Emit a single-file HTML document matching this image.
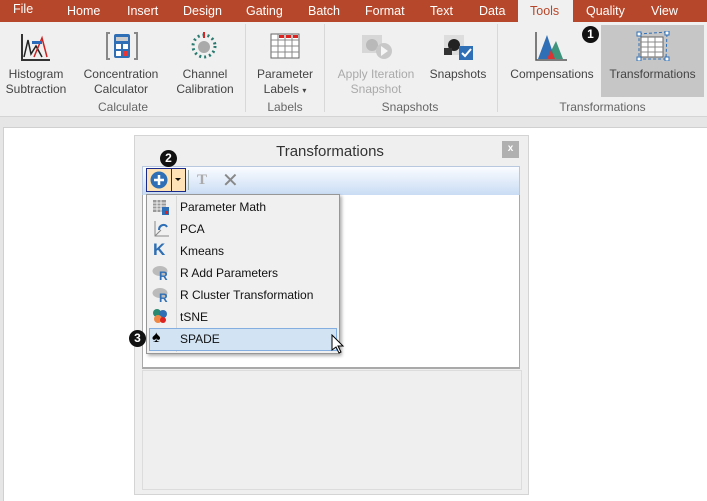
<!DOCTYPE html>
<html><head><meta charset="utf-8"><style>
*{box-sizing:border-box;margin:0;padding:0}
body{width:707px;height:501px;overflow:hidden;background:#e6e6e6;font-family:"Liberation Sans",sans-serif;font-size:12px;color:#444;position:relative}
.abs{position:absolute}
.tabs{left:0;top:0;width:707px;height:22px;background:#b7472a}
.tab{position:absolute;top:4px;color:#fff;font-size:12.5px}
.ribbon{left:0;top:22px;width:707px;height:95px;background:#f0f0f0;border-bottom:1px solid #d4d4d4}
.lbl{position:absolute;text-align:center;font-size:12px;color:#444;line-height:15px}
.grp{position:absolute;top:78px;font-size:12px;color:#666;text-align:center}
.sep{position:absolute;top:22px;width:1px;height:88px;background:#d8d8d8}
.mi{position:absolute;left:150px;width:186px;height:22px;font-size:12px;color:#111;line-height:22px}
.mi span{position:absolute;left:30px}
.badge{position:absolute;width:17px;height:17px;border-radius:50%;background:#111;color:#fff;font-weight:bold;font-size:12px;text-align:center;line-height:17px}
</style></head><body>
<div class="abs tabs"></div>
<div class="tab" style="left:13px;top:2px">File</div>
<div class="tab" style="left:67px">Home</div>
<div class="tab" style="left:127px">Insert</div>
<div class="tab" style="left:183px">Design</div>
<div class="tab" style="left:246px">Gating</div>
<div class="tab" style="left:308px">Batch</div>
<div class="tab" style="left:365px">Format</div>
<div class="tab" style="left:430px">Text</div>
<div class="tab" style="left:479px">Data</div>
<div class="abs" style="left:518px;top:0;width:55px;height:23px;background:#f0f0f0"></div>
<div class="tab" style="left:530px;color:#b7472a">Tools</div>
<div class="tab" style="left:586px">Quality</div>
<div class="tab" style="left:651px">View</div>
<div class="abs ribbon"></div>
<!-- ribbon icons -->
<svg class="abs" style="left:20px;top:32px" width="32" height="30"><path d="M2 2v26h28" stroke="#333" stroke-width="2" fill="none"/><path d="M4 25 L8 8 L11 22 L16 14 L22 25" stroke="#222" stroke-width="1.5" fill="none"/><path d="M14 25 L22 6 L27 25" stroke="#c22" stroke-width="1.5" fill="none"/><rect x="12" y="9" width="10" height="3" fill="#2a6ab8"/></svg>
<svg class="abs" style="left:106px;top:32px" width="32" height="28"><path d="M4 1H1v26h3M28 1h3v26h-3" stroke="#888" stroke-width="2" fill="none"/><rect x="8" y="2" width="16" height="24" rx="2" fill="#2f6fb5"/><rect x="10" y="5" width="12" height="4" fill="#ccc"/><rect x="10" y="12" width="5" height="5" fill="#fff"/><rect x="17" y="12" width="5" height="5" fill="#fff"/><rect x="10" y="19" width="5" height="5" fill="#fff"/><rect x="17" y="19" width="5" height="5" fill="#e33"/></svg>
<svg class="abs" style="left:189px;top:31px" width="30" height="30"><circle cx="15" cy="15" r="11" stroke="#2a7a70" stroke-width="3" stroke-dasharray="2 3" fill="none"/><circle cx="15" cy="16" r="6" fill="#aaa"/><rect x="14" y="1" width="2" height="6" fill="#d22"/></svg>
<svg class="abs" style="left:270px;top:33px" width="30" height="26"><rect x="1" y="1" width="28" height="24" fill="#fff" stroke="#666"/><path d="M1 7h28M1 13h28M1 19h28M8 1v24M15 1v24M22 1v24" stroke="#888"/><rect x="9" y="2" width="5" height="3" fill="#d22"/><rect x="16" y="2" width="5" height="3" fill="#d22"/><rect x="23" y="2" width="5" height="3" fill="#d22"/></svg>
<svg class="abs" style="left:360px;top:33px" width="32" height="28" opacity="0.45"><rect x="2" y="2" width="20" height="18" fill="#bbb"/><circle cx="12" cy="12" r="6" fill="#777"/><circle cx="24" cy="18" r="8" fill="#999"/><path d="M21 13v10l7-5z" fill="#fff"/></svg>
<svg class="abs" style="left:442px;top:34px" width="32" height="28"><rect x="2" y="1" width="20" height="20" fill="#ddd"/><circle cx="12" cy="11" r="6" fill="#222"/><rect x="2" y="14" width="8" height="7" fill="#333"/><rect x="17" y="12" width="14" height="14" fill="#2f6fb5"/><path d="M20 19l3 3 6-7" stroke="#fff" stroke-width="2" fill="none"/></svg>
<div class="abs" style="left:601px;top:25px;width:103px;height:72px;background:#c6c6c6"></div>
<svg class="abs" style="left:535px;top:32px" width="32" height="29"><path d="M1 0v28h31" stroke="#555" stroke-width="1.5" fill="none"/><path d="M3 27 L12 3 L20 27z" fill="#2f6fb5"/><path d="M12 27 L21 9 L28 27z" fill="#2a8a70" opacity="0.9"/><path d="M12 27 L16 18 L20 27z" fill="#d33"/></svg>
<svg class="abs" style="left:636px;top:31px" width="34" height="30"><path d="M3 3 L31 1 L30 28 L3 28z" fill="none" stroke="#2f6fb5" stroke-dasharray="3 2"/><rect x="5" y="6" width="22" height="20" fill="#fff" stroke="#666"/><path d="M5 11h22M5 16h22M5 21h22M12 6v20M19 6v20" stroke="#888"/><rect x="1" y="1" width="4" height="4" fill="#fff" stroke="#2f6fb5"/><rect x="29" y="0" width="4" height="4" fill="#fff" stroke="#2f6fb5"/><rect x="1" y="26" width="4" height="4" fill="#fff" stroke="#2f6fb5"/><rect x="29" y="26" width="4" height="4" fill="#fff" stroke="#2f6fb5"/></svg>
<div class="badge" style="left:582px;top:26px">1</div>
<div class="lbl" style="left:0;top:67px;width:72px">Histogram<br>Subtraction</div>
<div class="lbl" style="left:78px;top:67px;width:86px">Concentration<br>Calculator</div>
<div class="lbl" style="left:170px;top:67px;width:70px">Channel<br>Calibration</div>
<div class="lbl" style="left:250px;top:67px;width:70px">Parameter<br>Labels <span style="font-size:8px">▾</span></div>
<div class="lbl" style="left:330px;top:67px;width:92px;color:#aaa">Apply Iteration<br>Snapshot</div>
<div class="lbl" style="left:424px;top:67px;width:68px">Snapshots</div>
<div class="lbl" style="left:503px;top:67px;width:98px">Compensations</div>
<div class="lbl" style="left:601px;top:67px;width:103px">Transformations</div>
<div class="grp" style="left:78px;width:90px;top:100px">Calculate</div>
<div class="grp" style="left:250px;width:70px;top:100px">Labels</div>
<div class="grp" style="left:330px;width:160px;top:100px">Snapshots</div>
<div class="grp" style="left:500px;width:205px;top:100px">Transformations</div>
<div class="sep" style="left:245px;top:24px"></div>
<div class="sep" style="left:324px;top:24px"></div>
<div class="sep" style="left:497px;top:24px"></div>
<!-- work area -->
<div class="abs" style="left:3px;top:127px;width:704px;height:374px;background:#fff;border:1px solid #d0d0d0;border-right:none;border-bottom:none"></div>
<!-- dialog -->
<div class="abs" style="left:134px;top:135px;width:395px;height:360px;background:#efefef;border:1px solid #d4d4d4"></div>
<div class="abs" style="left:230px;top:143px;width:200px;text-align:center;font-size:15px;color:#333">Transformations</div>
<div class="abs" style="left:502px;top:141px;width:17px;height:17px;background:#b0b0b0;color:#fff;font-size:10px;font-weight:bold;text-align:center;line-height:16px">x</div>
<div class="abs" style="left:142px;top:166px;width:378px;height:30px;background:linear-gradient(#fafcff,#c9dcf4);border:1px solid #b8c8de"></div>
<div class="abs" style="left:146px;top:168px;width:26px;height:24px;background:#fde3b5;border:1px solid #1a2a8a"></div>
<div class="abs" style="left:171px;top:168px;width:15px;height:24px;background:#fde3b5;border:1px solid #1a2a8a"></div>
<svg class="abs" style="left:150px;top:171px" width="18" height="18"><circle cx="9" cy="9" r="8.5" fill="#2f6fb5"/><path d="M9 4v10M4 9h10" stroke="#fff" stroke-width="2.5"/></svg>
<div class="abs" style="left:175px;top:178px;border-left:3px solid transparent;border-right:3px solid transparent;border-top:3px solid #111"></div>
<div class="abs" style="left:188px;top:170px;width:1px;height:20px;background:#9aa"></div>
<div class="abs" style="left:197px;top:172px;font-family:'Liberation Serif';font-size:15px;font-weight:bold;color:#aaa">T</div>
<div class="abs" style="left:222px;top:168px;font-size:20px;color:#888">✕</div>
<div class="badge" style="left:160px;top:150px">2</div>
<div class="abs" style="left:142px;top:195px;width:378px;height:174px;background:#fff;border:1px solid #a9a9a9;border-top:none;border-bottom:2px solid #a9a9a9"></div>
<div class="abs" style="left:142px;top:370px;width:380px;height:120px;border:1px solid #dcdcdc"></div>
<!-- menu -->
<div class="abs" style="left:146px;top:194px;width:194px;height:160px;background:#f0f0f0;border:1px solid #979797;box-shadow:2px 2px 3px rgba(0,0,0,.3)"></div>
<div class="abs" style="left:176px;top:196px;width:1px;height:156px;background:#d8d8d8"></div>
<div class="abs" style="left:149px;top:328px;width:188px;height:23px;background:#d2e3f4;border:1px solid #84aee0"></div>
<div class="mi" style="top:196px"><span>Parameter Math</span></div>
<div class="mi" style="top:218px"><span>PCA</span></div>
<div class="mi" style="top:240px"><span>Kmeans</span></div>
<div class="mi" style="top:262px"><span>R Add Parameters</span></div>
<div class="mi" style="top:284px"><span>R Cluster Transformation</span></div>
<div class="mi" style="top:306px"><span>tSNE</span></div>
<div class="mi" style="top:328px"><span>SPADE</span></div>
<svg class="abs" style="left:153px;top:199px" width="16" height="16"><rect x="0" y="1" width="13" height="12" fill="#999"/><path d="M0 4h13M0 7h13M0 10h13M4 1v12M8 1v12" stroke="#eee"/><rect x="9" y="8" width="7" height="8" fill="#2f6fb5"/><rect x="12" y="12" width="3" height="3" fill="#d22"/></svg>
<svg class="abs" style="left:153px;top:221px" width="16" height="16"><path d="M2 0v15h14M2 15l6-6" stroke="#888" fill="none"/><path d="M6 9c0-5 6-7 8-3" stroke="#2f6fb5" stroke-width="2" fill="none"/></svg>
<div class="abs" style="left:153px;top:240px;font-size:17px;font-weight:bold;color:#2f6fb5">K</div>
<svg class="abs" style="left:152px;top:264px" width="18" height="17"><ellipse cx="8" cy="7" rx="7.5" ry="5" fill="#bbb"/><text x="7" y="16" font-family="Liberation Sans" font-weight="bold" font-size="12" fill="#2f6fb5">R</text></svg>
<svg class="abs" style="left:152px;top:286px" width="18" height="17"><ellipse cx="8" cy="7" rx="7.5" ry="5" fill="#bbb"/><text x="7" y="16" font-family="Liberation Sans" font-weight="bold" font-size="12" fill="#2f6fb5">R</text></svg>
<svg class="abs" style="left:152px;top:308px" width="16" height="16"><circle cx="5" cy="5" r="4" fill="#2a8a70"/><circle cx="11" cy="6" r="4" fill="#2f6fb5"/><circle cx="6" cy="11" r="4" fill="#e84"/><circle cx="11" cy="12" r="3" fill="#d22"/></svg>
<div class="abs" style="left:152px;top:329px;font-size:16px;color:#000">♠</div>
<div class="badge" style="left:129px;top:330px">3</div>
<svg class="abs" style="left:331px;top:334px" width="14" height="20"><path d="M1 1v15l4-3 3 6 2-1-3-6h5z" fill="#fff" stroke="#000"/></svg>
</body></html>
